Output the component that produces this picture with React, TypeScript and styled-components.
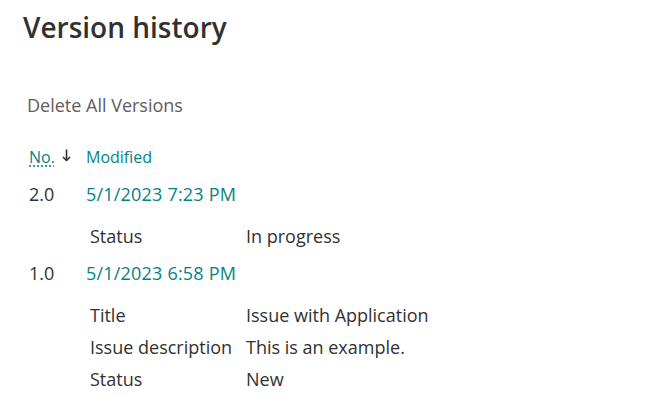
import React from "react";
import styled, { createGlobalStyle } from "styled-components";

const Global = createGlobalStyle`
  html, body { margin: 0; padding: 0; background: #ffffff; }
  body { font-family: "Segoe UI", "Open Sans", sans-serif; color: #323130; }
`;

const Page = styled.div`
  width: 654px;
  height: 408px;
  overflow: hidden;
  padding: 7px 0 0 23px;
  box-sizing: border-box;
  display: flex;
  flex-direction: column;
`;

const Title = styled.h1`
  margin: 0;
  font-size: 28px;
  font-weight: 600;
  line-height: 40px;
  color: #323130;
`;

const Command = styled.button`
  align-self: flex-start;
  margin: 46px 0 0 4px;
  padding: 0;
  border: none;
  background: none;
  font-family: inherit;
  font-size: 18px;
  line-height: 24px;
  color: #605e5c;
`;

const Table = styled.div`
  margin: 30px 0 0 6px;
  display: flex;
  flex-direction: column;
`;

const HeaderRow = styled.div`
  display: grid;
  grid-template-columns: 57px auto;
  font-size: 16px;
  line-height: 20px;
  color: #038387;
`;

const SortHeader = styled.span`
  display: flex;
  align-items: center;
  gap: 7px;
`;

const Abbr = styled.span`
  text-decoration: underline dotted;
  text-underline-offset: 3px;
`;

const ArrowIcon = styled.svg`
  width: 9px;
  height: 13px;
  margin-top: -3px;
  color: #323130;
`;

const VersionRow = styled.div<{ $first?: boolean }>`
  display: grid;
  grid-template-columns: 57px auto;
  font-size: 18px;
  line-height: 36px;
  margin-top: ${(p) => (p.$first ? "9px" : "0")};
`;

const DateLink = styled.span`
  color: #038387;
  letter-spacing: 0.2px;
`;

const Changes = styled.div`
  padding: 8px 0 3px 61px;
  display: grid;
  grid-template-columns: 156px auto;
  grid-auto-rows: 32px;
  align-items: center;
  font-size: 18px;
`;

const Label = styled.span``;
const Value = styled.span``;

type Version = {
  no: string;
  date: string;
  changes: [string, string][];
};

const versions: Version[] = [
  { no: "2.0", date: "5/1/2023 7:23 PM", changes: [["Status", "In progress"]] },
  {
    no: "1.0",
    date: "5/1/2023 6:58 PM",
    changes: [
      ["Title", "Issue with Application"],
      ["Issue description", "This is an example."],
      ["Status", "New"],
    ],
  },
];

export default function App() {
  return (
    <>
      <Global />
      <Page>
        <Title>Version history</Title>
        <Command>Delete All Versions</Command>
        <Table>
          <HeaderRow>
            <SortHeader>
              <Abbr>No.</Abbr>
              <ArrowIcon viewBox="0 0 9 13" fill="none" stroke="currentColor" strokeWidth="1.6">
                <path d="M4.5 0.5 V11.5" />
                <path d="M1 8 L4.5 11.5 L8 8" strokeLinejoin="round" />
              </ArrowIcon>
            </SortHeader>
            <span>Modified</span>
          </HeaderRow>
          {versions.map((v, i) => (
            <React.Fragment key={v.no}>
              <VersionRow $first={i === 0}>
                <span>{v.no}</span>
                <DateLink>{v.date}</DateLink>
              </VersionRow>
              <Changes>
                {v.changes.map(([l, val]) => (
                  <React.Fragment key={l}>
                    <Label>{l}</Label>
                    <Value>{val}</Value>
                  </React.Fragment>
                ))}
              </Changes>
            </React.Fragment>
          ))}
        </Table>
      </Page>
    </>
  );
}
